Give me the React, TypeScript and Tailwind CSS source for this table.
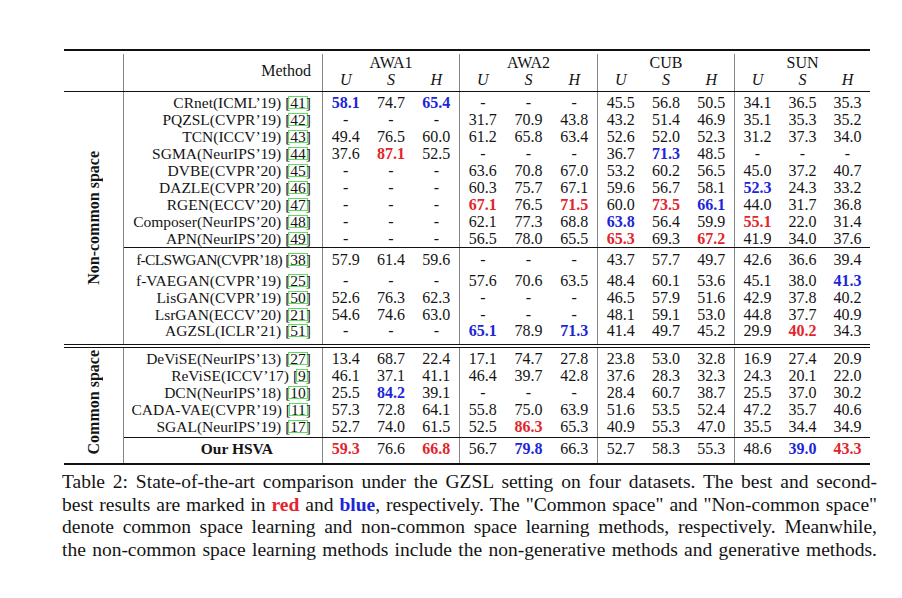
import React from 'react';

type RowData = { name: string; cite: string; vals: string[]; h: string; pad: string; tight?: boolean };

const groupW = ['w-[137px]', 'w-[138px]', 'w-[137px]', 'w-[136px]'];
const groups = ['AWA1', 'AWA2', 'CUB', 'SUN'];

const s = (x: string) => x.split(' ');

const nonGenerative: RowData[] = [
  { name: 'CRnet(ICML’19)', cite: '41', vals: s('b58.1 74.7 b65.4 - - - 45.5 56.8 50.5 34.1 36.5 35.3'), h: 'h-[19px]', pad: 'pt-[2px]' },
  { name: 'PQZSL(CVPR’19)', cite: '42', vals: s('- - - 31.7 70.9 43.8 43.2 51.4 46.9 35.1 35.3 35.2'), h: 'h-[17px]', pad: '' },
  { name: 'TCN(ICCV’19)', cite: '43', vals: s('49.4 76.5 60.0 61.2 65.8 63.4 52.6 52.0 52.3 31.2 37.3 34.0'), h: 'h-[17px]', pad: '' },
  { name: 'SGMA(NeurIPS’19)', cite: '44', vals: s('37.6 r87.1 52.5 - - - 36.7 b71.3 48.5 - - -'), h: 'h-[17px]', pad: '' },
  { name: 'DVBE(CVPR’20)', cite: '45', vals: s('- - - 63.6 70.8 67.0 53.2 60.2 56.5 45.0 37.2 40.7'), h: 'h-[17px]', pad: '' },
  { name: 'DAZLE(CVPR’20)', cite: '46', vals: s('- - - 60.3 75.7 67.1 59.6 56.7 58.1 b52.3 24.3 33.2'), h: 'h-[17px]', pad: '' },
  { name: 'RGEN(ECCV’20)', cite: '47', vals: s('- - - r67.1 76.5 r71.5 60.0 r73.5 b66.1 44.0 31.7 36.8'), h: 'h-[17px]', pad: '' },
  { name: 'Composer(NeurIPS’20)', cite: '48', vals: s('- - - 62.1 77.3 68.8 b63.8 56.4 59.9 r55.1 22.0 31.4'), h: 'h-[17px]', pad: '' },
  { name: 'APN(NeurIPS’20)', cite: '49', vals: s('- - - 56.5 78.0 65.5 r65.3 69.3 r67.2 41.9 34.0 37.6'), h: 'h-[17px]', pad: '' },
];

const generative: RowData[] = [
  { name: 'f-CLSWGAN(CVPR’18)', cite: '38', vals: s('57.9 61.4 59.6 - - - 43.7 57.7 49.7 42.6 36.6 39.4'), h: 'h-[22px]', pad: 'pt-[3px]', tight: true },
  { name: 'f-VAEGAN(CVPR’19)', cite: '25', vals: s('- - - 57.6 70.6 63.5 48.4 60.1 53.6 45.1 38.0 b41.3'), h: 'h-[19px]', pad: 'pt-[2px]' },
  { name: 'LisGAN(CVPR’19)', cite: '50', vals: s('52.6 76.3 62.3 - - - 46.5 57.9 51.6 42.9 37.8 40.2'), h: 'h-[17px]', pad: '' },
  { name: 'LsrGAN(ECCV’20)', cite: '21', vals: s('54.6 74.6 63.0 - - - 48.1 59.1 53.0 44.8 37.7 40.9'), h: 'h-[16px]', pad: '' },
  { name: 'AGZSL(ICLR’21)', cite: '51', vals: s('- - - b65.1 78.9 b71.3 41.4 49.7 45.2 29.9 r40.2 34.3'), h: 'h-[22px]', pad: '' },
];

const common: RowData[] = [
  { name: 'DeViSE(NeurIPS’13)', cite: '27', vals: s('13.4 68.7 22.4 17.1 74.7 27.8 23.8 53.0 32.8 16.9 27.4 20.9'), h: 'h-[19px]', pad: 'pt-[2px]' },
  { name: 'ReViSE(ICCV’17)', cite: '9', vals: s('46.1 37.1 41.1 46.4 39.7 42.8 37.6 28.3 32.3 24.3 20.1 22.0'), h: 'h-[17px]', pad: '' },
  { name: 'DCN(NeurIPS’18)', cite: '10', vals: s('25.5 b84.2 39.1 - - - 28.4 60.7 38.7 25.5 37.0 30.2'), h: 'h-[17px]', pad: '' },
  { name: 'CADA-VAE(CVPR’19)', cite: '11', vals: s('57.3 72.8 64.1 55.8 75.0 63.9 51.6 53.5 52.4 47.2 35.7 40.6'), h: 'h-[17px]', pad: '' },
  { name: 'SGAL(NeurIPS’19)', cite: '17', vals: s('52.7 74.0 61.5 52.5 r86.3 65.3 40.9 55.3 47.0 35.5 34.4 34.9'), h: 'h-[19px]', pad: '' },
];

const ours = s('r59.3 76.6 r66.8 56.7 b79.8 66.3 52.7 58.3 55.3 48.6 b39.0 r43.3');

function Val({ v }: { v: string }) {
  if (v.startsWith('r')) return <span className="font-bold text-[#e3242b]">{v.slice(1)}</span>;
  if (v.startsWith('b')) return <span className="font-bold text-[#1c26d8]">{v.slice(1)}</span>;
  return <>{v}</>;
}

function Cite({ n }: { n: string }) {
  return (
    <span className="tracking-normal">
      [<span className="-mx-[2px] inline-block border border-[#5fdc5f] px-[1px] leading-[11px]">{n}</span>]
    </span>
  );
}

function Cells({ vals, pad }: { vals: string[]; pad: string }) {
  return (
    <>
      {groupW.map((w, g) => (
        <div key={g} className={`flex border-l border-[#868686] text-[16px] ${w}`}>
          {vals.slice(g * 3, g * 3 + 3).map((v, i) => (
            <div key={i} className={`flex-1 text-center ${pad}`}>
              <Val v={v} />
            </div>
          ))}
        </div>
      ))}
    </>
  );
}

function Row({ r }: { r: RowData }) {
  return (
    <div className={`flex ${r.h}`}>
      <div className={`w-[198px] whitespace-nowrap pr-[11px] text-right ${r.pad} ${r.tight ? 'tracking-[-0.7px]' : ''}`}>
        {r.name} <Cite n={r.cite} />
      </div>
      <Cells vals={r.vals} pad={r.pad} />
    </div>
  );
}

function SideLabel({ text, extra }: { text: string; extra: string }) {
  return (
    <div className={`flex w-[60px] items-center justify-center border-r border-[#868686] ${extra}`}>
      <span className="rotate-180 text-[16px] font-bold leading-none [writing-mode:vertical-rl]">{text}</span>
    </div>
  );
}

export default function App() {
  return (
    <div className="h-[598px] w-[902px] overflow-hidden bg-white pl-[62px] pt-[49px] font-[family-name:Liberation_Serif,Times_New_Roman,serif] text-[#141414]">
      {/* table */}
      <div className="ml-[2px] w-[806px] text-[15.5px] leading-[17px]">
        <div className="h-[2px] bg-[#111]" />
        <div className="flex h-[40px] items-end text-[16px]">
          <div className="h-[37px] w-[60px] border-r border-[#868686]" />
          <div className="flex h-[37px] w-[198px] items-center justify-end pb-[4px] pr-[11px]">Method</div>
          {groups.map((g, i) => (
            <div key={g} className={`flex h-[37px] flex-col border-l border-[#868686] ${groupW[i]}`}>
              <div className="text-center">{g}</div>
              <div className="flex italic">
                <div className="flex-1 text-center">U</div>
                <div className="flex-1 text-center">S</div>
                <div className="flex-1 text-center">H</div>
              </div>
            </div>
          ))}
        </div>
        <div className="h-[1px] bg-[#111]" />

        {/* non-common space */}
        <div className="flex">
          <SideLabel text="Non-common space" extra="" />
          <div className="flex flex-col">
            {nonGenerative.map((r) => (
              <Row key={r.name} r={r} />
            ))}
            <div className="h-[1px] bg-[#111]" />
            {generative.map((r) => (
              <Row key={r.name} r={r} />
            ))}
          </div>
        </div>

        <div className="h-[4px] border-y border-[#111]" />

        {/* common space */}
        <div className="flex">
          <SideLabel text="Common space" extra="pb-[6px]" />
          <div className="flex flex-col">
            {common.map((r) => (
              <Row key={r.name} r={r} />
            ))}
            <div className="h-[1px] bg-[#111]" />
            <div className="flex h-[25px]">
              <div className="w-[198px] pr-[49px] pt-[2px] text-right font-bold">Our HSVA</div>
              <Cells vals={ours} pad="pt-[2px]" />
            </div>
          </div>
        </div>
        <div className="h-[2px] bg-[#111]" />
      </div>

      {/* caption */}
      <div className="mt-[6px] w-[815px] text-[19.5px] leading-[22.6px] [text-align-last:justify]">
        <div className="text-justify">
          Table 2: State-of-the-art comparison under the GZSL setting on four datasets. The best and second-
        </div>
        <div className="text-justify">
          best results are marked in <span className="font-bold text-[#e3242b]">red</span> and{' '}
          <span className="font-bold text-[#1c26d8]">blue</span>, respectively. The "Common space" and "Non-common space"
        </div>
        <div className="text-justify">
          denote common space learning and non-common space learning methods, respectively. Meanwhile,
        </div>
        <div className="text-justify">
          the non-common space learning methods include the non-generative methods and generative methods.
        </div>
      </div>
    </div>
  );
}
